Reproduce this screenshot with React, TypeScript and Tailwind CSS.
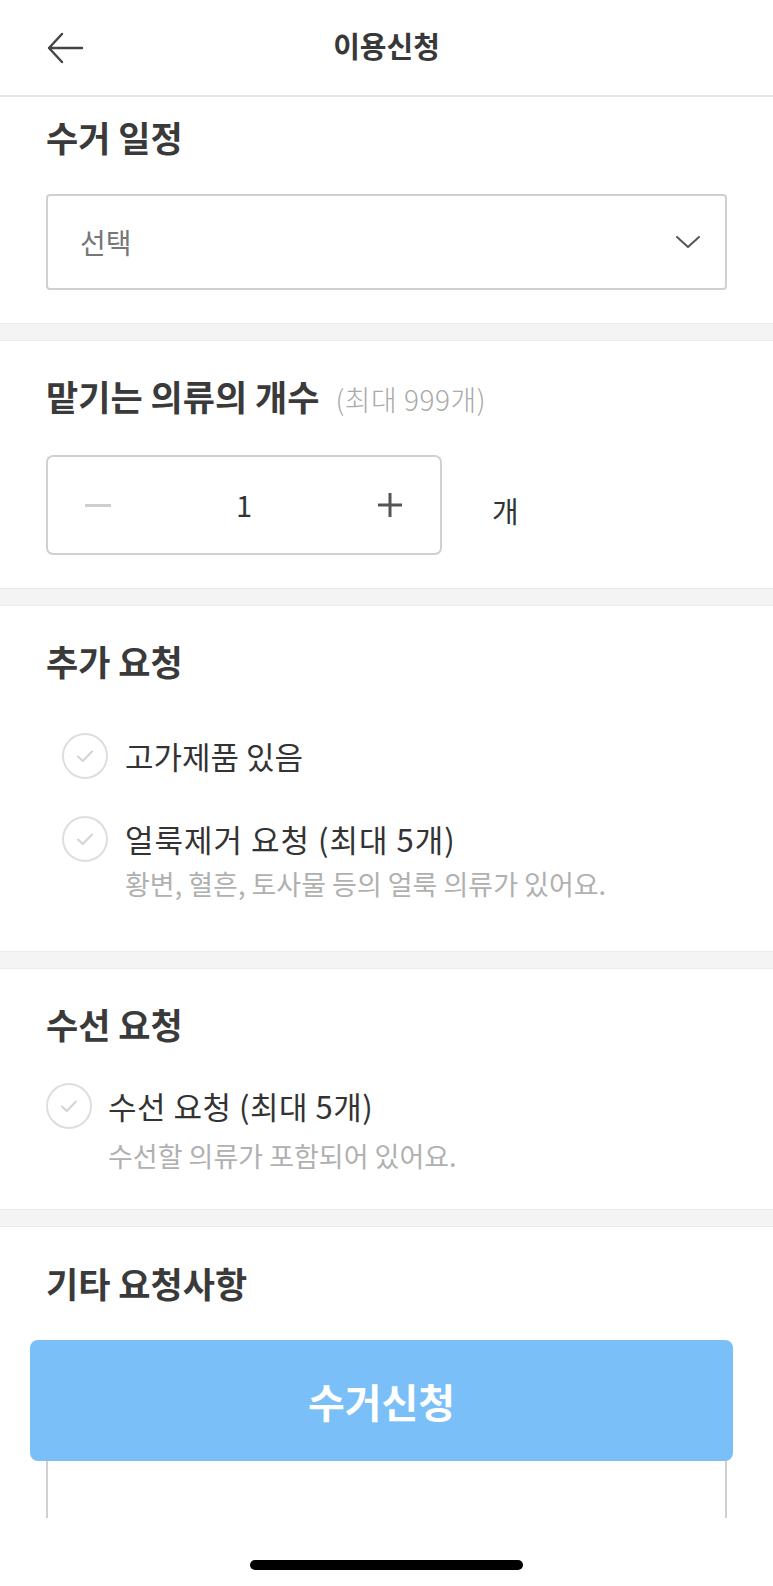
import React, { useState } from 'react';

const FONT = { fontFamily: '"Noto Sans CJK KR", "Noto Sans", sans-serif' };

const Divider = () => (
  <div className="h-[18px] bg-[#f4f4f4] border-y border-[#ebebeb]" />
);

const CheckCircle = ({ checked, onClick }: { checked: boolean; onClick: () => void }) => (
  <button
    type="button"
    onClick={onClick}
    className={`w-[46px] h-[46px] shrink-0 rounded-full border-2 flex items-center justify-center ${
      checked ? 'border-[#7bbff8] bg-[#7bbff8]' : 'border-[#dedede] bg-white'
    }`}
  >
    <svg width="18" height="14" viewBox="0 0 18 14" fill="none">
      <path
        d="M2 7.5 L6.8 12 L16 2.5"
        stroke={checked ? '#ffffff' : '#d4d4d4'}
        strokeWidth="2"
        strokeLinecap="round"
        strokeLinejoin="round"
      />
    </svg>
  </button>
);

const App: React.FC = () => {
  const [count, setCount] = useState(1);
  const [checks, setChecks] = useState<Record<string, boolean>>({});

  const toggle = (key: string) => setChecks((prev) => ({ ...prev, [key]: !prev[key] }));

  return (
    <div style={FONT} className="relative w-[773px] h-[1586px] overflow-hidden bg-white text-[#333]">
      {/* 헤더 */}
      <header className="h-[97px] flex items-center justify-center relative border-b-2 border-[#e6e6e6]">
        <button type="button" className="absolute left-[46px] top-[32px] w-[38px] h-[32px] flex items-center">
          <svg width="38" height="32" viewBox="0 0 38 32" fill="none">
            <path d="M36 16 H3 M16 2 L3 16 L16 30" stroke="#444" strokeWidth="2.4" strokeLinecap="round" strokeLinejoin="round" />
          </svg>
        </button>
        <h1 className="text-[29px] font-bold text-[#383838] leading-none -mt-[4px]">이용신청</h1>
      </header>

      {/* 수거 일정 */}
      <section className="px-[46px] pt-[20px] pb-[33px]">
        <h2 className="text-[35px] font-bold text-[#3a3a3a] leading-[40px]">수거 일정</h2>
        <div className="mt-[37px] h-[96px] border-2 border-[#d0d0d0] rounded-[4px] flex items-center justify-between pl-[32px] pr-[24px]">
          <span className="text-[28px] text-[#777]">선택</span>
          <svg width="26" height="14" viewBox="0 0 26 14" fill="none">
            <path d="M2 2 L13 12 L24 2" stroke="#555" strokeWidth="2" strokeLinecap="round" strokeLinejoin="round" />
          </svg>
        </div>
      </section>

      <Divider />

      {/* 맡기는 의류의 개수 */}
      <section className="px-[46px] pt-[35px] pb-[33px]">
        <h2 className="leading-[40px] flex items-baseline">
          <span className="text-[35px] font-bold text-[#3a3a3a]">맡기는 의류의 개수</span>
          <span className="ml-[16px] text-[28px] font-light text-[#aaa] tracking-[0.5px]">(최대 999개)</span>
        </h2>
        <div className="mt-[36px] flex items-center">
          <div className="w-[396px] h-[100px] border-2 border-[#d0d0d0] rounded-[7px] flex items-center justify-between px-[36px]">
            <button type="button" onClick={() => setCount((c) => Math.max(1, c - 1))} className="w-[28px] h-[28px] flex items-center justify-center">
              <span className="block w-[26px] h-[3px] bg-[#cfcfcf]" />
            </button>
            <span className="text-[29px] text-[#333]">{count}</span>
            <button type="button" onClick={() => setCount((c) => Math.min(999, c + 1))} className="w-[28px] h-[28px] flex items-center justify-center">
              <svg width="26" height="26" viewBox="0 0 26 26">
                <path d="M13 1 V25 M1 13 H25" stroke="#555" strokeWidth="3" />
              </svg>
            </button>
          </div>
          <span className="ml-[50px] text-[29px] text-[#333] mt-[12px]">개</span>
        </div>
      </section>

      <Divider />

      {/* 추가 요청 */}
      <section className="px-[46px] pt-[35px] pb-[50px]">
        <h2 className="text-[35px] font-bold text-[#3a3a3a] leading-[40px]">추가 요청</h2>
        <div className="mt-[52px] pl-[16px] flex flex-col gap-[37px]">
          <div className="flex items-center gap-[17px]">
            <CheckCircle checked={!!checks.high} onClick={() => toggle('high')} />
            <span className="text-[31px] leading-[40px]">고가제품 있음</span>
          </div>
          <div>
            <div className="flex items-center gap-[17px]">
              <CheckCircle checked={!!checks.stain} onClick={() => toggle('stain')} />
              <span className="text-[31px] leading-[40px] tracking-[1px]">얼룩제거 요청 (최대 5개)</span>
            </div>
            <p className="pl-[63px] mt-[5px] text-[27px] leading-[34px] text-[#b0b0b0]">
              황변, 혈흔, 토사물 등의 얼룩 의류가 있어요.
            </p>
          </div>
        </div>
      </section>

      <Divider />

      {/* 수선 요청 */}
      <section className="px-[46px] pt-[35px] pb-[36px]">
        <h2 className="text-[35px] font-bold text-[#3a3a3a] leading-[40px]">수선 요청</h2>
        <div className="mt-[39px]">
          <div className="flex items-center gap-[16px]">
            <CheckCircle checked={!!checks.repair} onClick={() => toggle('repair')} />
            <span className="text-[31px] leading-[40px] tracking-[0.5px]">수선 요청 (최대 5개)</span>
          </div>
          <p className="pl-[62px] mt-[10px] text-[27px] leading-[34px] text-[#b0b0b0]">
            수선할 의류가 포함되어 있어요.
          </p>
        </div>
      </section>

      <Divider />

      {/* 기타 요청사항 */}
      <section className="px-[46px] pt-[36px]">
        <h2 className="text-[35px] font-bold text-[#3a3a3a] leading-[40px]">기타 요청사항</h2>
        <textarea className="mt-[44px] block w-full h-[260px] border-2 border-[#d0d0d0] rounded-[4px] resize-none outline-none p-[20px] text-[26px]" />
      </section>

      {/* 하단 고정 버튼 */}
      <button
        type="button"
        className="absolute left-[30px] top-[1340px] w-[703px] h-[121px] rounded-[8px] bg-[#7bbff8] text-white text-[40px] font-bold flex items-center justify-center"
      >
        수거신청
      </button>

      <div className="absolute left-0 right-0 bottom-0 h-[68px] bg-white flex justify-center">
        <div className="mt-[42px] w-[273px] h-[10px] rounded-full bg-black" />
      </div>
    </div>
  );
};

export default App;
